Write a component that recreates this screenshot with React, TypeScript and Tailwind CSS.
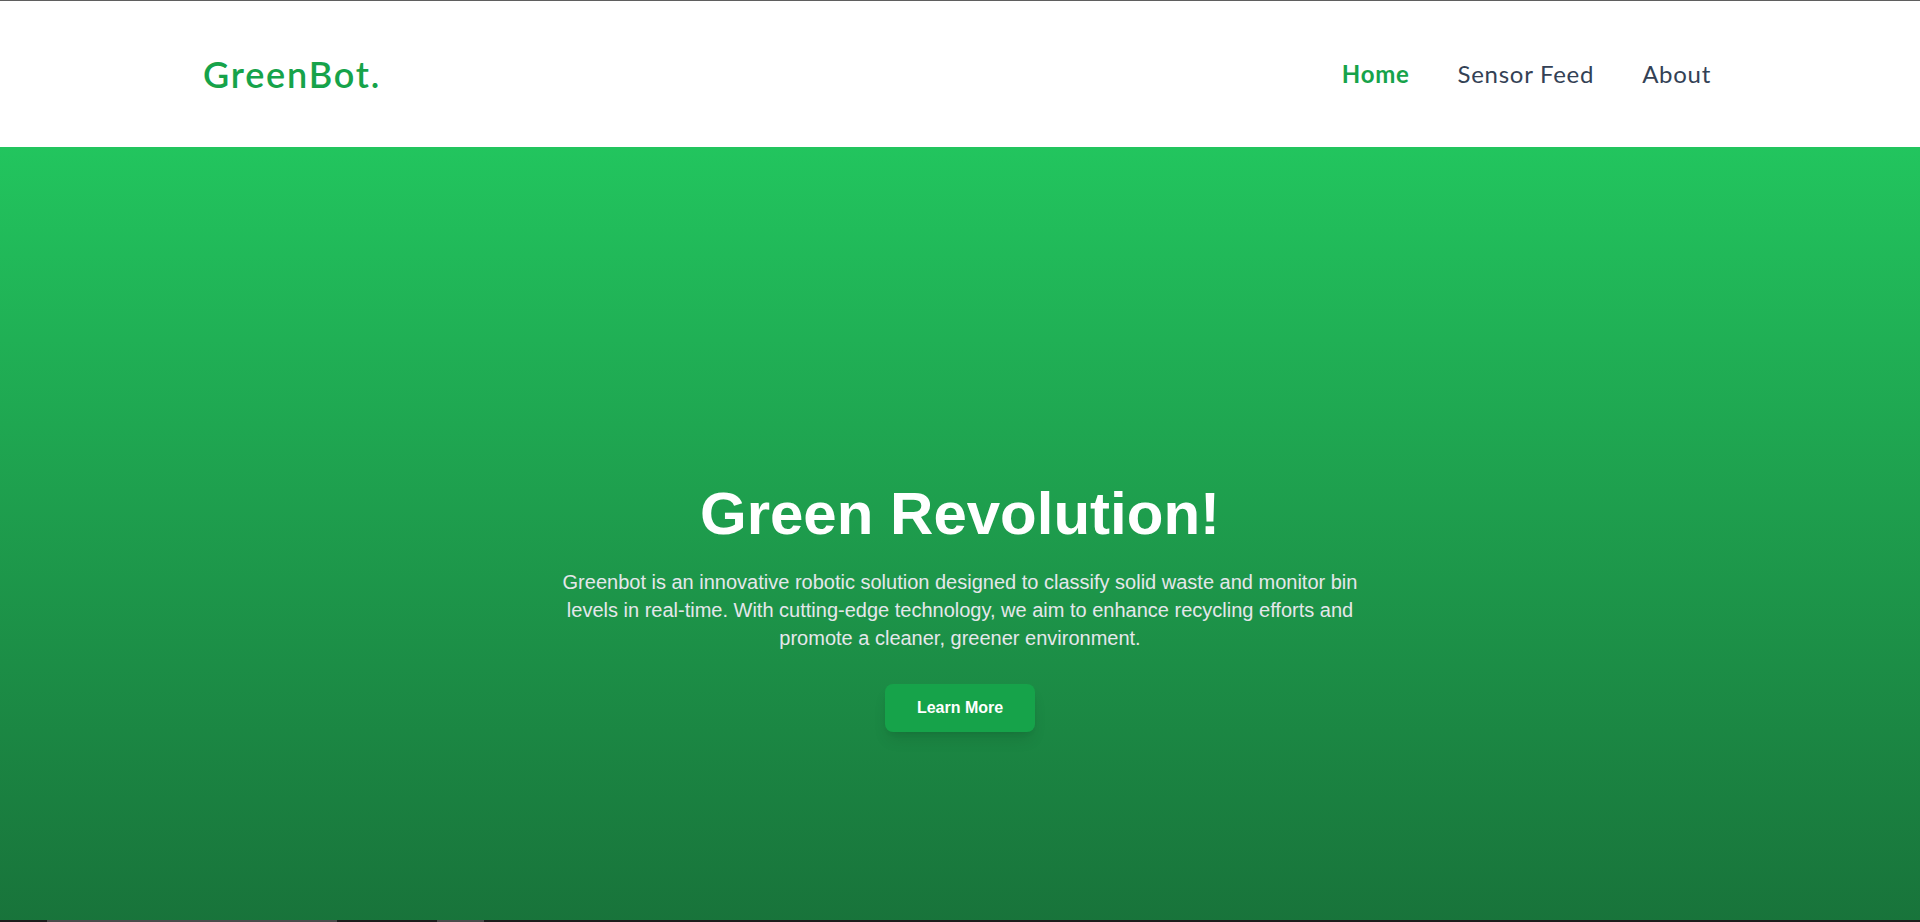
import React from "react";

const NavBar = () => {
  return (
    <header className="h-[147px] border-t border-[#5f5f5f] bg-white">
      <div className="flex h-full items-center justify-between pl-[203px] pr-[209px] font-['Lato',sans-serif]">
        <a href="#" className="text-4xl font-semibold tracking-[0.05em] text-[#16a34a]">
          GreenBot.
        </a>
        <nav className="flex items-center gap-12 text-2xl tracking-[0.03em]">
          <a href="#" className="font-bold text-[#16a34a]">
            Home
          </a>
          <a href="#" className="text-[#334155]">
            Sensor Feed
          </a>
          <a href="#" className="text-[#334155]">
            About
          </a>
        </nav>
      </div>
    </header>
  );
};

const Hero = () => {
  return (
    <section className="flex min-h-screen flex-col items-center justify-center bg-gradient-to-b from-[#22c55e] to-[#166534] px-4 text-center font-['Liberation_Sans',Arial,sans-serif] text-white">
      <h1 className="mb-6 text-6xl font-bold">Green Revolution!</h1>
      <p className="mb-8 max-w-[840px] text-xl text-[#e5e7eb]">
        Greenbot is an innovative robotic solution designed to classify solid
        waste and monitor bin levels in real-time. With cutting-edge
        technology, we aim to enhance recycling efforts and promote a cleaner,
        greener environment.
      </p>
      <button className="rounded-lg bg-[#16a34a] px-8 py-3 font-bold text-white shadow-lg hover:bg-[#15803d]">
        Learn More
      </button>
    </section>
  );
};

export default function App() {
  return (
    <div className="min-h-screen bg-white">
      <NavBar />
      <Hero />
      {/* window bottom edge */}
      <div className="fixed bottom-0 left-0 flex h-[2px] w-full bg-[#1c1c1c]">
        <div className="ml-[47px] w-[290px] bg-[#4b4b4b]" />
        <div className="ml-[100px] w-[47px] bg-[#4b4b4b]" />
      </div>
    </div>
  );
}
